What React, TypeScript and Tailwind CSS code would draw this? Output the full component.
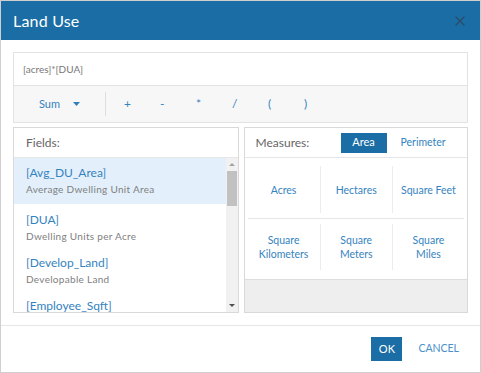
import React from 'react';
import { X } from 'lucide-react';

const fields = [
    { name: '[Avg_DU_Area]', desc: 'Average Dwelling Unit Area' },
    { name: '[DUA]', desc: 'Dwelling Units per Acre' },
    { name: '[Develop_Land]', desc: 'Developable Land' },
    { name: '[Employee_Sqft]', desc: 'Employee Square Feet' },
];

const operators = ['+', '-', '*', '/', '(', ')'];

export default function App() {
    return (
        <div className="w-[481px] h-[373px] bg-white border border-[#cfcfcf] flex flex-col overflow-hidden font-['Lato',sans-serif]">
            {/* Header */}
            <div className="h-[39px] shrink-0 bg-[#1b6ea5] flex items-center justify-between pl-[12px] pr-[12px]">
                <span className="text-white text-[16px] tracking-[0.2px]">Land Use</span>
                <X size={16} strokeWidth={2} className="text-[#2b4d6b]" />
            </div>

            {/* Body */}
            <div className="flex-1 px-[12px] pt-[12px] flex flex-col">
                {/* Expression box */}
                <div className="border border-[#e2e2e2] flex flex-col">
                    <div className="h-[32px] flex items-center px-[9px] text-[10px] text-[#777]">[acres]*[DUA]</div>
                    <div className="h-[37px] bg-[#f7f7f7] border-t border-[#e2e2e2] flex items-center">
                        <div className="w-[91px] flex items-center justify-center gap-[13px] text-[11px] text-[#3583c0]">
                            <span>Sum</span>
                            <svg width="7" height="4" viewBox="0 0 7 4"><path d="M0 0h7L3.5 4z" fill="#2f7fbd" /></svg>
                        </div>
                        <div className="w-px h-[24px] bg-[#dedede]" />
                        <div className="flex items-center pl-[18px]">
                            {operators.map(op => (
                                <span key={op} className="w-[36px] text-[12px] text-[#3583c0]">{op}</span>
                            ))}
                        </div>
                    </div>
                </div>

                {/* Panels */}
                <div className="mt-[4px] flex gap-[5px] h-[186px]">
                    {/* Fields */}
                    <div className="w-[226px] border border-[#d9d9d9] flex flex-col">
                        <div className="h-[30px] shrink-0 border-b border-[#e6e6e6] flex items-center px-[12px] text-[12px] text-[#666]">Fields:</div>
                        <div className="flex-1 flex overflow-hidden">
                            <div className="flex-1 overflow-hidden">
                                {fields.map((f, i) => (
                                    <div
                                        key={f.name}
                                        className={i === 0 ? 'bg-[#e3f0fb] px-[12px] pt-[6px] pb-[6px]' : 'px-[12px] pt-[7px] pb-[2px]'}
                                    >
                                        <div className="text-[12px] leading-[17px] text-[#3583c0]">{f.name}</div>
                                        <div className="text-[10px] leading-[17px] text-[#808080] tracking-[0.3px]">{f.desc}</div>
                                    </div>
                                ))}
                            </div>
                            <div className="w-[12px] bg-[#f1f1f1] flex flex-col items-center">
                                <div className="h-[13px] flex items-center justify-center">
                                    <svg width="6" height="3" viewBox="0 0 6 3"><path d="M0 3h6L3 0z" fill="#a3a3a3" /></svg>
                                </div>
                                <div className="w-[10px] h-[35px] bg-[#c1c1c1]" />
                                <div className="flex-1" />
                                <div className="h-[13px] flex items-center justify-center">
                                    <svg width="6" height="3" viewBox="0 0 6 3"><path d="M0 0h6L3 3z" fill="#505050" /></svg>
                                </div>
                            </div>
                        </div>
                    </div>

                    {/* Measures */}
                    <div className="w-[225px] border border-[#d9d9d9] flex flex-col">
                        <div className="h-[30px] shrink-0 border-b border-[#e6e6e6] flex items-center pl-[11px]">
                            <span className="text-[12px] text-[#666] w-[85px]">Measures:</span>
                            <span className="w-[46px] h-[20px] bg-[#1b6ea5] text-white text-[11px] flex items-center justify-center">Area</span>
                            <span className="ml-[14px] text-[10.5px] text-[#3583c0]">Perimeter</span>
                        </div>
                        <div className="bg-white px-[3px] pt-[8px] pb-[9px]">
                            <div className="grid grid-cols-3 h-[47px] text-[10.5px] text-[#3583c0] text-center leading-[14px]">
                                <div className="flex items-center justify-center">Acres</div>
                                <div className="flex items-center justify-center border-l border-[#ececec]">Hectares</div>
                                <div className="flex items-center justify-center border-l border-[#ececec]">Square Feet</div>
                            </div>
                            <div className="my-[5px] border-t border-[#e6e6e6]" />
                            <div className="grid grid-cols-3 h-[46px] text-[10.5px] text-[#3583c0] text-center leading-[14px]">
                                <div className="flex items-center justify-center">Square<br />Kilometers</div>
                                <div className="flex items-center justify-center border-l border-[#ececec]">Square<br />Meters</div>
                                <div className="flex items-center justify-center border-l border-[#ececec]">Square<br />Miles</div>
                            </div>
                        </div>
                        <div className="flex-1 bg-[#eeeeee] border-t border-[#dddddd]" />
                    </div>
                </div>
                <div className="flex-1" />
            </div>

            {/* Footer */}
            <div className="h-[47px] shrink-0 border-t border-[#e6e6e6] flex items-center justify-end pr-[21px]">
                <span className="w-[31px] h-[24px] bg-[#1b6ea5] text-white text-[11px] flex items-center justify-center">OK</span>
                <span className="ml-[16px] text-[10.5px] text-[#4a90c8]">CANCEL</span>
            </div>
        </div>
    );
}
